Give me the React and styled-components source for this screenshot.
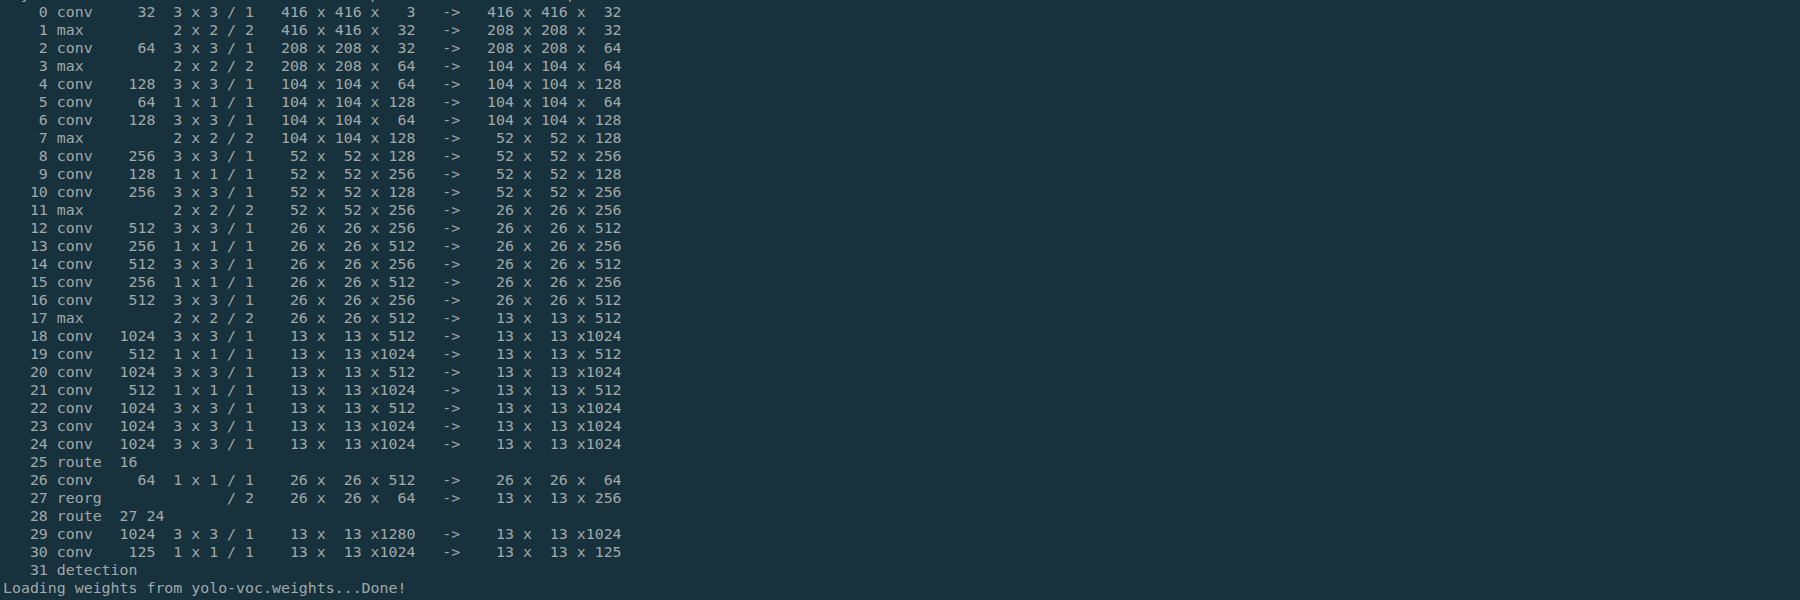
import React from 'react'
import styled, { createGlobalStyle } from 'styled-components'

const GlobalStyle = createGlobalStyle`
  html, body {
    margin: 0;
    padding: 0;
    background: #17313d;
  }
`

const Screen = styled.div`
  width: 1800px;
  height: 600px;
  overflow: hidden;
  background: #17313d;
  color: #a1a9a9;
  font-family: "DejaVu Sans Mono", "Liberation Mono", monospace;
  font-size: 14.9px;
  line-height: 18px;
`

// terminal is scrolled, so the header line sits mostly above the top edge
const Output = styled.div`
  display: flex;
  flex-direction: column;
  margin-top: -15.5px;
  padding-left: 3px;
`

const Line = styled.div`
  white-space: pre;
  height: 18px;
`

const pad = (v, w) => String(v).padStart(w)
const dims = (d) => `${pad(d[0], 4)} x${pad(d[1], 4)} x${pad(d[2], 4)}`

const layers = [
  ['conv', 32, 3, 1, [416, 416, 3], [416, 416, 32]],
  ['max', 0, 2, 2, [416, 416, 32], [208, 208, 32]],
  ['conv', 64, 3, 1, [208, 208, 32], [208, 208, 64]],
  ['max', 0, 2, 2, [208, 208, 64], [104, 104, 64]],
  ['conv', 128, 3, 1, [104, 104, 64], [104, 104, 128]],
  ['conv', 64, 1, 1, [104, 104, 128], [104, 104, 64]],
  ['conv', 128, 3, 1, [104, 104, 64], [104, 104, 128]],
  ['max', 0, 2, 2, [104, 104, 128], [52, 52, 128]],
  ['conv', 256, 3, 1, [52, 52, 128], [52, 52, 256]],
  ['conv', 128, 1, 1, [52, 52, 256], [52, 52, 128]],
  ['conv', 256, 3, 1, [52, 52, 128], [52, 52, 256]],
  ['max', 0, 2, 2, [52, 52, 256], [26, 26, 256]],
  ['conv', 512, 3, 1, [26, 26, 256], [26, 26, 512]],
  ['conv', 256, 1, 1, [26, 26, 512], [26, 26, 256]],
  ['conv', 512, 3, 1, [26, 26, 256], [26, 26, 512]],
  ['conv', 256, 1, 1, [26, 26, 512], [26, 26, 256]],
  ['conv', 512, 3, 1, [26, 26, 256], [26, 26, 512]],
  ['max', 0, 2, 2, [26, 26, 512], [13, 13, 512]],
  ['conv', 1024, 3, 1, [13, 13, 512], [13, 13, 1024]],
  ['conv', 512, 1, 1, [13, 13, 1024], [13, 13, 512]],
  ['conv', 1024, 3, 1, [13, 13, 512], [13, 13, 1024]],
  ['conv', 512, 1, 1, [13, 13, 1024], [13, 13, 512]],
  ['conv', 1024, 3, 1, [13, 13, 512], [13, 13, 1024]],
  ['conv', 1024, 3, 1, [13, 13, 1024], [13, 13, 1024]],
  ['conv', 1024, 3, 1, [13, 13, 1024], [13, 13, 1024]],
  ['route', [16]],
  ['conv', 64, 1, 1, [26, 26, 512], [26, 26, 64]],
  ['reorg', 0, 0, 2, [26, 26, 64], [13, 13, 256]],
  ['route', [27, 24]],
  ['conv', 1024, 3, 1, [13, 13, 1280], [13, 13, 1024]],
  ['conv', 125, 1, 1, [13, 13, 1024], [13, 13, 125]],
  ['detection'],
]

const formatLayer = (l, i) => {
  const [type, f, s, st, input, output] = l
  const head = `${pad(i, 5)} `
  if (type === 'conv')
    return `${head}conv  ${pad(f, 5)} ${pad(s, 2)} x${pad(s, 2)} /${pad(st, 2)}  ${dims(input)}   ->  ${dims(output)}`
  if (type === 'max')
    return `${head}max          ${s} x ${s} / ${st}  ${dims(input)}   ->  ${dims(output)}`
  if (type === 'reorg')
    return `${head}reorg              / ${st}  ${dims(input)}   ->  ${dims(output)}`
  if (type === 'route')
    return `${head}route ${f.map(n => ` ${n}`).join('')}`
  return `${head}detection`
}

const lines = [
  'layer     filters    size              input                output',
  ...layers.map(formatLayer),
  'Loading weights from yolo-voc.weights...Done!',
  'data/dog.jpg: Predicted in 8.741395 seconds.',
]

export default function App() {
  return (
    <Screen>
      <GlobalStyle />
      <Output>
        {lines.map((text, i) => (
          <Line key={i}>{text}</Line>
        ))}
      </Output>
    </Screen>
  )
}
